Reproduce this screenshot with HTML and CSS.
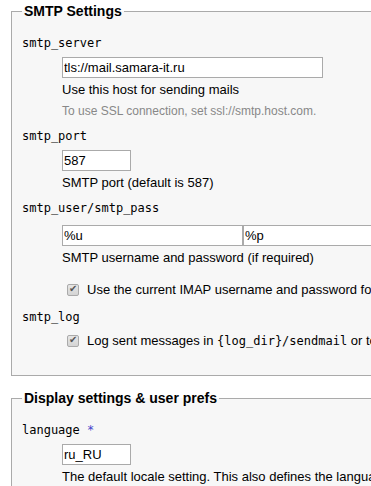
FILE: index.html
```html
<!DOCTYPE html>
<html lang="en">
<head>
    <meta charset="UTF-8">
    <title>Roundcube Webmail Installer</title>
    <link rel="stylesheet" href="styles.css">
</head>
<body>
    <fieldset>
        <legend>SMTP Settings</legend>
        <dl class="configblock">
            <dt class="propname">smtp_server</dt>
            <dd>
                <input type="text" class="text server" value="tls://mail.samara-it.ru">
                <div class="desc">Use this host for sending mails</div>
                <p class="hint">To use SSL connection, set ssl://smtp.host.com.</p>
            </dd>

            <dt class="propname">smtp_port</dt>
            <dd>
                <input type="text" class="text short" value="587">
                <div class="desc">SMTP port (default is 587)</div>
            </dd>

            <dt class="propname">smtp_user/smtp_pass</dt>
            <dd class="wide">
                <div class="pair">
                    <input type="text" class="text user" value="%u">
                    <input type="text" class="text pass" value="%p">
                </div>
                <div class="desc">SMTP username and password (if required)</div>
                <div class="check spaced">
                    <input type="checkbox" checked>
                    <label>Use the current IMAP username and password for SMTP authentication</label>
                </div>
            </dd>

            <dt class="propname">smtp_log</dt>
            <dd>
                <div class="check">
                    <input type="checkbox" checked>
                    <label>Log sent messages in <tt>{log_dir}/sendmail</tt> or to syslog.</label>
                </div>
            </dd>
        </dl>
    </fieldset>

    <fieldset>
        <legend>Display settings &amp; user prefs</legend>
        <dl class="configblock">
            <dt class="propname">language <span class="userconf">*</span></dt>
            <dd>
                <input type="text" class="text short" value="ru_RU">
                <div class="desc">The default locale setting. This also defines the language of the login screen.</div>
            </dd>
        </dl>
    </fieldset>
</body>
</html>
```

FILE: styles.css
```css
html, body {
    overflow: hidden;
}
body {
    margin: 0;
    padding: 3px 0 0 11px;
    width: 760px;
    font-family: "Liberation Sans", Arial, sans-serif;
    font-size: 13px;
    color: #000;
    background-color: #fff;
}
fieldset {
    margin: 0 0 14px 0;
    padding: 0 10px 15px 10px;
    border: 1px solid #aaa;
    background-color: #f7f7f7;
}
legend {
    padding: 0 2px;
    font-size: 14px;
    font-weight: bold;
    line-height: 16px;
}
.configblock {
    margin: 16px 0 0 0;
}
dt.propname {
    margin: 0;
    font-family: "DejaVu Sans Mono", monospace;
    font-size: 12px;
    line-height: 16px;
}
.userconf {
    color: #44c;
}
dd {
    margin: 6px 0 9px 40px;
    line-height: 16px;
    white-space: nowrap;
}
dd.wide {
    margin-top: 9px;
}
input.text {
    display: block;
    box-sizing: border-box;
    height: 21px;
    margin: 0;
    padding: 1px 1px;
    border: 1px solid #aaa;
    background-color: #fff;
    font-family: "Liberation Sans", Arial, sans-serif;
    font-size: 13px;
    color: #000;
}
.server {
    width: 261px;
}
.short {
    width: 69px;
}
.pair {
    display: flex;
}
.user,
.pass {
    width: 181px;
}
.desc {
    margin-top: 4px;
}
.hint {
    margin: 5px 0 6px 0;
    font-size: 12px;
    color: #888;
}
.check {
    display: flex;
    align-items: center;
    height: 20px;
}
.check.spaced {
    margin-top: 14px;
}
.check input {
    appearance: none;
    -webkit-appearance: none;
    position: relative;
    width: 12px;
    height: 12px;
    margin: 0 8px 0 5px;
    border: 1px solid #aaa;
    border-radius: 2px;
    background: linear-gradient(#e6e6e6, #d4d4d4);
}
.check input:checked::after {
    content: "\2714";
    position: absolute;
    left: 1px;
    top: -2px;
    font-size: 10px;
    color: #555;
}
tt {
    font-family: "DejaVu Sans Mono", monospace;
    font-size: 12px;
}
```
